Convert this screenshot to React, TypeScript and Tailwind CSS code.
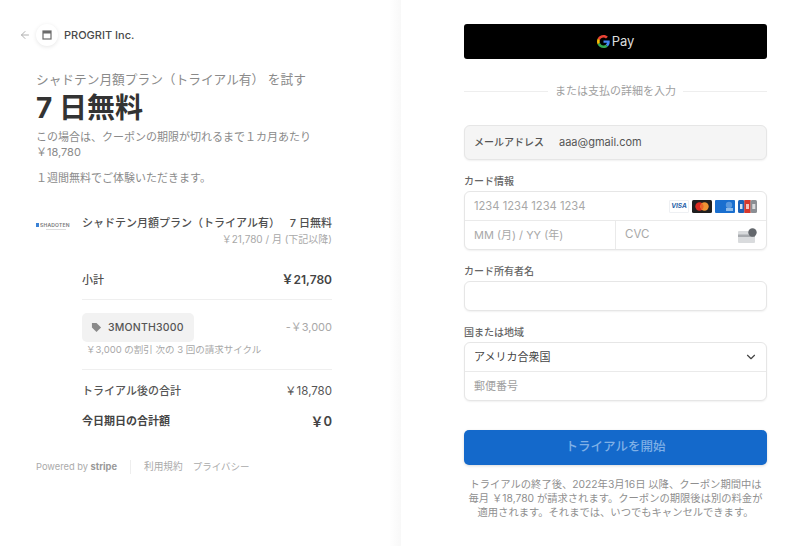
import React from "react";
import { ArrowLeft, ChevronDown } from "lucide-react";

const FONT = "font-['Inter','Noto_Sans_CJK_JP',sans-serif]";

// Card brand marks shown at the right of the card number field
const CardBrands = () => (
  <div className="flex items-center gap-[3px]">
    <div className="w-[20px] h-[13px] rounded-[1px] bg-white border border-[#eef0f3] flex items-center justify-center text-[6.5px] leading-none font-bold italic text-[#2a5fa8]">
      VISA
    </div>
    <svg width="20" height="13" viewBox="0 0 20 13">
      <rect width="20" height="13" rx="1.500" fill="#1f1f1f" />
      <circle cx="7.500" cy="6.500" r="4.200" fill="#dc2a20" />
      <circle cx="12.500" cy="6.500" r="4.200" fill="#ee9433" />
      <path d="M10 3.200a4.200 4.200 0 0 1 0 6.600a4.200 4.200 0 0 1 0-6.600z" fill="#e8642a" />
    </svg>
    <svg width="20" height="13" viewBox="0 0 20 13">
      <rect width="20" height="13" rx="1" fill="#1a6fcf" />
      <circle cx="14" cy="5" r="3.200" fill="#5a99de" />
      <rect x="11" y="8" width="7" height="3" fill="#8fbbe9" />
    </svg>
    <svg width="19" height="13" viewBox="0 0 19 13">
      <rect width="6.500" height="13" rx="1.500" fill="#1c62b8" />
      <rect x="6.300" width="6.400" height="13" fill="#d8382c" />
      <rect x="12.500" width="6.500" height="13" rx="1.500" fill="#8b8f94" />
      <rect x="2" y="4" width="2.500" height="5" fill="#cfe0f4" />
      <rect x="8" y="4" width="3" height="5" fill="#f3c2bd" />
      <rect x="14.300" y="4" width="3" height="5" fill="#d9dbdd" />
    </svg>
  </div>
);

const CvcIcon = () => (
  <svg width="19" height="15" viewBox="0 0 19 15">
    <rect x="0" y="3" width="17" height="12" rx="1" fill="#d9dbdd" />
    <rect x="0" y="6.500" width="17" height="2.500" fill="#a8abaf" />
    <circle cx="14.500" cy="4.500" r="4.200" fill="#63676c" />
  </svg>
);

const GoogleG = () => (
  <svg width="13" height="13" viewBox="0 0 48 48">
    <path fill="#EA4335" d="M24 9.500c3.500 0 6.700 1.200 9.200 3.600l6.900-6.900C35.900 2.400 30.500 0 24 0 14.600 0 6.500 5.400 2.600 13.200l8 6.200C12.500 13.600 17.800 9.500 24 9.500z" />
    <path fill="#4285F4" d="M47 24.500c0-1.600-.1-3.100-.4-4.500H24v9h12.900c-.6 3-2.200 5.500-4.700 7.200l7.700 6C44.400 38 47 31.800 47 24.500z" />
    <path fill="#FBBC05" d="M10.600 28.600c-.5-1.400-.8-3-.8-4.600s.3-3.200.8-4.600l-8-6.200C.9 16.500 0 20.100 0 24s.9 7.500 2.600 10.800l8-6.200z" />
    <path fill="#34A853" d="M24 48c6.500 0 11.900-2.100 15.900-5.800l-7.700-6c-2.100 1.400-4.900 2.300-8.200 2.300-6.200 0-11.500-4.100-13.400-9.900l-8 6.200C6.500 42.600 14.600 48 24 48z" />
  </svg>
);

function OrderSummary() {
  return (
    <div className="w-[401px] shrink-0 pl-[36px] pr-[69px] pt-[24px] bg-[linear-gradient(to_right,#ffffff_97%,#f8f8f8)]">
      <div className="flex items-center -ml-[17px] h-[22px]">
        <ArrowLeft size={12} className="text-[#b0b0b0]" />
        <div className="ml-[5px] w-[22px] h-[22px] rounded-full bg-white shadow-[0_1px_4px_rgba(0,0,0,0.1)] flex items-center justify-center">
          <svg width="10" height="10" viewBox="0 0 10 10">
            <rect x="1" y="1" width="8" height="8" fill="none" stroke="#6b6b6b" strokeWidth="1.200" />
            <rect x="1" y="1" width="8" height="2.500" fill="#6b6b6b" />
          </svg>
        </div>
        <span className="ml-[6px] text-[11px] font-medium text-[#4a4a4a]">PROGRIT Inc.</span>
      </div>

      <p className="mt-[25px] text-[12.700px] leading-[18px] text-[#8a8a8a]">
        シャドテン月額プラン（トライアル有） を試す
      </p>
      <h1 className="mt-[1px] text-[28px] leading-[36px] font-bold text-[#333]">7 日無料</h1>
      <p className="mt-[4px] text-[11px] leading-[15px] text-[#8a8a8a]">
        この場合は、クーポンの期限が切れるまで１カ月あたり
        <br />
        ￥18,780
      </p>
      <p className="mt-[11px] text-[11px] leading-[15px] text-[#8a8a8a]">１週間無料でご体験いただきます。</p>

      <div className="mt-[29px] flex">
        <div className="w-[46px] shrink-0 pt-[7px]">
          <div className="flex items-center gap-[1px]">
            <span className="w-[3px] h-[4px] bg-[#3b82d6]" />
            <span className="text-[5px] leading-[6px] font-semibold text-[#777] tracking-[0.2px]">SHADOTEN</span>
          </div>
          <div className="mt-[1px] ml-[10px] w-[20px] h-[1px] bg-[#ddd]" />
        </div>
        <div className="flex-1">
          <div className="flex justify-between text-[11px] leading-[16px] font-medium text-[#4f4f4f]">
            <span>シャドテン月額プラン（トライアル有）</span>
            <span>7 日無料</span>
          </div>
          <p className="mt-[1px] text-right text-[10px] leading-[14px] text-[#a8a8a8]">￥21,780 / 月 (下記以降)</p>
        </div>
      </div>

      <div className="ml-[46px]">
        <div className="mt-[26px] pb-[11px] flex justify-between items-center border-b border-[#efefef]">
          <span className="text-[11px] leading-[16px] font-medium text-[#4f4f4f]">小計</span>
          <span className="text-[12px] leading-[16px] font-semibold text-[#444]">￥21,780</span>
        </div>

        <div className="pt-[13px] pb-[12px] border-b border-[#efefef]">
          <div className="flex justify-between items-center">
            <div className="h-[29px] w-[112px] rounded-[5px] bg-[#f2f2f2] flex items-center pl-[9px]">
              <svg width="11" height="11" viewBox="0 0 12 12">
                <path d="M1 1h5l5 5-5 5-5-5z" fill="#8a8a8a" />
              </svg>
              <span className="ml-[6px] text-[10.500px] font-medium text-[#555] tracking-[0.2px]">3MONTH3000</span>
            </div>
            <span className="text-[11px] text-[#a8a8a8]">-￥3,000</span>
          </div>
          <p className="mt-[1px] ml-[4px] text-[9.500px] leading-[14px] text-[#a8a8a8]">￥3,000 の割引 次の 3 回の請求サイクル</p>
        </div>

        <div className="mt-[13px] flex justify-between items-center">
          <span className="text-[11px] leading-[16px] font-medium text-[#555]">トライアル後の合計</span>
          <span className="text-[11.500px] leading-[16px] text-[#555]">￥18,780</span>
        </div>
        <div className="mt-[14px] flex justify-between items-center text-[#444]">
          <span className="text-[11px] leading-[16px] font-semibold">今日期日の合計額</span>
          <span className="text-[13px] leading-[16px] font-semibold">￥0</span>
        </div>
      </div>

      <div className="mt-[31px] flex items-center text-[9.300px] text-[#aaa]">
        <span>Powered by <span className="font-bold text-[#999]">stripe</span></span>
        <span className="mx-[13px] h-[14px] w-px bg-[#eee]" />
        <span className="text-[9.700px]">利用規約</span>
        <span className="ml-[10px] text-[9.500px]">プライバシー</span>
      </div>
    </div>
  );
}

function PaymentForm() {
  const label = "text-[10px] leading-[14px] font-medium text-[#666] mb-[3px]";
  const field = "border border-[#e6e6e6] bg-white rounded-[6px] shadow-[0_1px_2px_rgba(0,0,0,0.06)]";
  return (
    <div className="w-[303px] ml-[63px] pt-[24px]">
      <div className="h-[35px] bg-black rounded-[3px] flex items-center justify-center gap-[2px]">
        <GoogleG />
        <span className="text-[13px] text-[#ddd]">Pay</span>
      </div>

      <div className="mt-[25px] flex items-center">
        <div className="flex-1 h-px bg-[#eee]" />
        <span className="mx-[7px] text-[11px] leading-[14px] text-[#a0a0a0]">または支払の詳細を入力</span>
        <div className="flex-1 h-px bg-[#eee]" />
      </div>

      <div className="mt-[27px] h-[35px] rounded-[6px] border border-[#e6e6e6] bg-[#f5f5f5] shadow-[0_1px_2px_rgba(0,0,0,0.06)] flex items-center pl-[9px] text-[#555]">
        <span className="text-[10px] font-medium w-[85px]">メールアドレス</span>
        <span className="text-[11px]">aaa@gmail.com</span>
      </div>

      <div className="mt-[14px]">
        <p className={label}>カード情報</p>
        <div className={field}>
          <div className="h-[29px] flex items-center justify-between pl-[9px] pr-[9px] border-b border-[#eaeaea]">
            <span className="text-[11.200px] text-[#a8a8a8]">1234 1234 1234 1234</span>
            <CardBrands />
          </div>
          <div className="h-[28px] flex">
            <div className="w-[151px] flex items-center pl-[9px] border-r border-[#eaeaea] text-[11px] text-[#a8a8a8]">
              MM (月) / YY (年)
            </div>
            <div className="flex-1 flex items-center justify-between pl-[9px] pr-[9px] text-[11.500px] text-[#a8a8a8]">
              <span>CVC</span>
              <CvcIcon />
            </div>
          </div>
        </div>
      </div>

      <div className="mt-[14px]">
        <p className={label}>カード所有者名</p>
        <div className={`${field} h-[30px]`} />
      </div>

      <div className="mt-[14px]">
        <p className={label}>国または地域</p>
        <div className={field}>
          <div className="h-[29px] flex items-center justify-between pl-[9px] pr-[8px] border-b border-[#eaeaea]">
            <span className="text-[11px] text-[#444]">アメリカ合衆国</span>
            <ChevronDown size={14} className="text-[#444]" />
          </div>
          <div className="h-[28px] flex items-center pl-[9px] text-[11px] text-[#a0a0a0]">郵便番号</div>
        </div>
      </div>

      <div className="mt-[29px] h-[35px] rounded-[5px] bg-[#1469cb] shadow-[0_1px_3px_rgba(0,0,0,0.15)] flex items-center justify-center text-[12.500px] font-medium text-[#7fb0e6]">
        トライアルを開始
      </div>

      <p className="mt-[12px] text-center text-[10.300px] leading-[14px] text-[#8f8f8f]">
        トライアルの終了後、2022年3月16日 以降、クーポン期間中は
        <br />
        毎月 ￥18,780 が請求されます。クーポンの期限後は別の料金が
        <br />
        適用されます。それまでは、いつでもキャンセルできます。
      </p>
    </div>
  );
}

export default function App() {
  return (
    <div className={`${FONT} flex w-[800px] h-[546px] overflow-hidden bg-white`}>
      <OrderSummary />
      <PaymentForm />
    </div>
  );
}
